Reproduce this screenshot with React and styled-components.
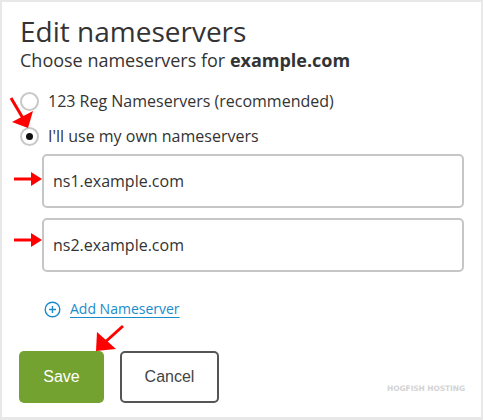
import styled, { createGlobalStyle } from "styled-components"

const GlobalStyle = createGlobalStyle`
  html, body {
    margin: 0;
    padding: 0;
    background: #e8e8e8;
  }
  * { box-sizing: border-box; }
`

const Page = styled.div`
  position: relative;
  width: 483px;
  height: 420px;
  border: 2px solid #e8e8e8;
  border-bottom-width: 3px;
  background: #fff;
  padding: 12px 17px 0 17px;
  font-family: "Open Sans", "Liberation Sans", sans-serif;
  color: #333;
`

const Title = styled.h1`
  margin: 0 0 0 1px;
  font-size: 28px;
  font-weight: 400;
  line-height: 34px;
  color: #333;
`

const Subtitle = styled.p`
  margin: 0 0 0 1px;
  font-size: 18px;
  line-height: 24px;
  b { font-weight: 700; }
`

const Options = styled.div`
  margin: 18px 0 0 1px;
  display: flex;
  flex-direction: column;
  gap: 13px;
`

const Option = styled.label`
  display: flex;
  align-items: center;
  gap: 9px;
  font-size: 16px;
  line-height: 22px;
`

const Radio = styled.span`
  width: 19px;
  height: 19px;
  border-radius: 50%;
  border: 2px solid #c8c8c8;
  display: flex;
  align-items: center;
  justify-content: center;
  &::after {
    content: "";
    width: 7px;
    height: 7px;
    border-radius: 50%;
    background: ${(p) => (p.checked ? "#111" : "transparent")};
  }
`

const Fields = styled.div`
  margin: 7px 0 0 23px;
  display: flex;
  flex-direction: column;
  gap: 10px;
`

const Field = styled.div`
  height: 54px;
  width: 422px;
  border: 2px solid #c6c6c6;
  border-radius: 5px;
  padding: 0 9px;
  display: flex;
  align-items: center;
  font-size: 16px;
  color: #333;
`

const AddLink = styled.a`
  margin: 27px 0 0 25px;
  display: flex;
  align-items: center;
  gap: 9px;
  color: #1a8ccc;
  font-size: 14px;
  line-height: 20px;
  span {
    text-decoration: underline;
    text-underline-offset: 3px;
  }
`

const Actions = styled.div`
  margin-top: 32px;
  display: flex;
  gap: 16px;
  align-items: center;
`

const Button = styled.button`
  height: 52px;
  padding: 0;
  width: ${(p) => (p.primary ? "85px" : "99px")};
  border-radius: 5px;
  font-family: "Liberation Sans", Arial, sans-serif;
  font-size: 16px;
  background: ${(p) => (p.primary ? "#74a230" : "#fff")};
  color: ${(p) => (p.primary ? "#fff" : "#444")};
  border: ${(p) => (p.primary ? "none" : "2px solid #555")};
`

const Mark = styled.div`
  position: absolute;
  right: 16px;
  bottom: 24px;
  font-family: "DejaVu Sans", sans-serif;
  font-weight: 700;
  font-size: 7.5px;
  letter-spacing: -0.1px;
  color: #d4d4d4;
`

const Arrows = styled.svg`
  position: absolute;
  left: -2px;
  top: -2px;
  pointer-events: none;
`

const PlusCircle = () => (
  <svg width="17" height="17" viewBox="0 0 17 17">
    <circle cx="8.5" cy="8.5" r="7.3" fill="none" stroke="#1a8ccc" strokeWidth="1.4" />
    <path d="M8.5 5v7M5 8.5h7" stroke="#1a8ccc" strokeWidth="1.4" />
  </svg>
)

const App = () => {
  return (
    <>
      <GlobalStyle />
      <Page>
        <Title>Edit nameservers</Title>
        <Subtitle>
          Choose nameservers for <b>example.com</b>
        </Subtitle>
        <Options>
          <Option>
            <Radio />
            123 Reg Nameservers (recommended)
          </Option>
          <Option>
            <Radio checked />
            I'll use my own nameservers
          </Option>
        </Options>
        <Fields>
          <Field>ns1.example.com</Field>
          <Field>ns2.example.com</Field>
        </Fields>
        <AddLink>
          <PlusCircle />
          <span>Add Nameserver</span>
        </AddLink>
        <Actions>
          <Button primary>Save</Button>
          <Button>Cancel</Button>
        </Actions>
        <Mark>HOGFISH HOSTING</Mark>

        {/* red pointers */}
        <Arrows width="483" height="420" viewBox="0 0 483 420">
          <g fill="#f00" stroke="#f00">
            <line x1="11" y1="98" x2="24" y2="120" strokeWidth="3" />
            <polygon points="12,122 33,111 28,128" stroke="none" />
            <line x1="14" y1="179" x2="34" y2="179" strokeWidth="3" />
            <polygon points="31,172 42,179 31,186" stroke="none" />
            <line x1="14" y1="240" x2="34" y2="240" strokeWidth="3" />
            <polygon points="31,233 42,240 31,247" stroke="none" />
            <line x1="123" y1="326" x2="103" y2="344" strokeWidth="3" />
            <polygon points="97,332 116,349 96,351" stroke="none" />
          </g>
        </Arrows>
      </Page>
    </>
  )
}

export default App
